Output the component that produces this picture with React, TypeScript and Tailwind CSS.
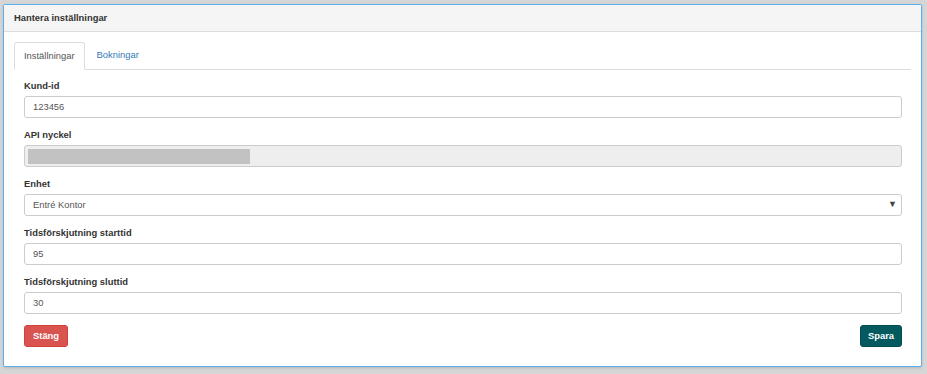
const Label = ({ children }: { children: React.ReactNode }) => (
  <div className="text-[9.4px] font-bold text-[#333] leading-[14px] mb-[3px]">{children}</div>
);

const TextInput = ({ value }: { value: string }) => (
  <div className="h-[22px] border border-[#ccc] rounded-[3px] bg-white flex items-center px-[8px] text-[9.4px] text-[#555]">
    {value}
  </div>
);

export default function App() {
  return (
    <div className="w-[927px] h-[374px] bg-[#d6d6d6] pt-[4px] pl-[3px] font-['Liberation_Sans',Arial,sans-serif]">
      <div className="w-[919px] h-[363px] bg-white border border-[#5ab0ee] rounded-[2px] shadow-[0_1px_3px_rgba(0,0,0,0.15)] flex flex-col">
        <div className="h-[27px] bg-[#f5f5f5] border-b border-[#ddd] flex items-center px-[10px] text-[9.4px] font-bold text-[#333]">
          Hantera inställningar
        </div>
        <div className="px-[10px] pt-[10px]">
          <div className="flex border-b border-[#ddd] h-[28px]">
            <div className="h-[28px] px-[9px] flex items-center border border-[#ddd] border-b-white rounded-t-[3px] bg-white text-[9.4px] text-[#555] -mb-px">
              Inställningar
            </div>
            <div className="h-[27px] px-[12px] flex items-center text-[9.4px] text-[#337ab7]">Bokningar</div>
          </div>
          <div className="pl-[10px] pr-[9px] pt-[9px] flex flex-col">
            <div className="mb-[10px]">
              <Label>Kund-id</Label>
              <TextInput value="123456" />
            </div>
            <div className="mb-[10px]">
              <Label>API nyckel</Label>
              <div className="h-[22px] border border-[#ccc] rounded-[3px] bg-[#eee] flex items-center px-[3px]">
                <div className="w-[222px] h-[15px] bg-[#c2c2c2]" />
              </div>
            </div>
            <div className="mb-[10px]">
              <Label>Enhet</Label>
              <div className="h-[22px] border border-[#ccc] rounded-[3px] bg-white flex items-center justify-between pl-[8px] pr-[4px] text-[9.4px] text-[#555]">
                <span>Entré Kontor</span>
                <span className="text-[9px] text-[#444]">▼</span>
              </div>
            </div>
            <div className="mb-[10px]">
              <Label>Tidsförskjutning starttid</Label>
              <TextInput value="95" />
            </div>
            <div className="mb-[11px]">
              <Label>Tidsförskjutning sluttid</Label>
              <TextInput value="30" />
            </div>
            <div className="flex justify-between">
              <button className="h-[22px] px-[8px] bg-[#d9534f] border border-[#d43f3a] rounded-[3px] text-white text-[9.4px] font-bold">
                Stäng
              </button>
              <button className="h-[22px] px-[7px] bg-[#045a5e] border border-[#034c50] rounded-[3px] text-white text-[9.4px] font-bold">
                Spara
              </button>
            </div>
          </div>
        </div>
      </div>
    </div>
  );
}
